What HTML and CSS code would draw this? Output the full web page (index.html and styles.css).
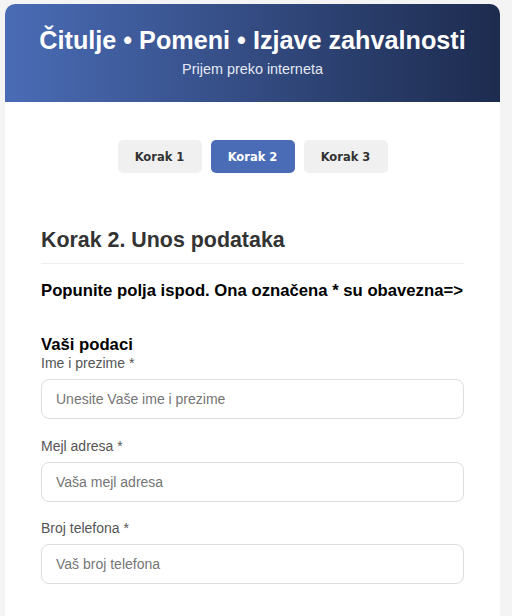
FILE: index.html
```html
<!DOCTYPE html>
<html lang="sr">
<head>
<meta charset="utf-8">
<title>Čitulje • Pomeni • Izjave zahvalnosti</title>
<link rel="stylesheet" href="styles.css">
</head>
<body>
<div class="container">
  <header class="header">
    <h1 class="title">Čitulje • Pomeni • Izjave zahvalnosti</h1>
    <p class="subtitle">Prijem preko interneta</p>
  </header>
  <main class="content">
    <nav class="steps">
      <span class="step">Korak 1</span>
      <span class="step step-active">Korak 2</span>
      <span class="step">Korak 3</span>
    </nav>
    <h2 class="section-title">Korak 2. Unos podataka</h2>
    <p class="intro">Popunite polja ispod. Ona označena * su obavezna=&gt;</p>
    <h3 class="group-title">Vaši podaci</h3>
    <div class="field">
      <label class="label" for="ime">Ime i prezime *</label>
      <input class="input" id="ime" type="text" placeholder="Unesite Vaše ime i prezime">
    </div>
    <div class="field">
      <label class="label" for="mejl">Mejl adresa *</label>
      <input class="input" id="mejl" type="email" placeholder="Vaša mejl adresa">
    </div>
    <div class="field">
      <label class="label" for="tel">Broj telefona *</label>
      <input class="input" id="tel" type="tel" placeholder="Vaš broj telefona">
    </div>
  </main>
</div>
</body>
</html>
```
FILE: styles.css
```css
html, body {
  margin: 0;
  padding: 0;
}
body {
  background: #f4f4f4;
  font-family: "Liberation Sans", Arial, sans-serif;
  padding: 4px 12px 0 5px;
}
.container {
  background: #fff;
  border-radius: 10px 10px 0 0;
  overflow: hidden;
  min-height: 620px;
}
.header {
  background: linear-gradient(90deg, #4a6cb6 0%, #1d2b4e 100%);
  color: #fff;
  text-align: center;
  height: 98px;
  box-sizing: border-box;
  padding-top: 21px;
}
.title {
  margin: 0;
  font-size: 25.2px;
  font-weight: bold;
  line-height: 30px;
}
.subtitle {
  margin: 5px 0 0;
  font-size: 14.4px;
  line-height: 18px;
  color: #e4e9f3;
}
.content {
  padding: 38px 36px 20px;
}
.steps {
  display: flex;
  justify-content: center;
  gap: 9px;
}
.step {
  width: 84px;
  height: 33px;
  display: flex;
  align-items: center;
  justify-content: center;
  background: #f0f0f0;
  color: #333;
  border-radius: 5px;
  font-family: "DejaVu Sans", Tahoma, sans-serif;
  font-weight: bold;
  font-size: 11.5px;
}
.step-active {
  background: #4a6cb6;
  color: #fff;
}
.section-title {
  margin: 55px 0 0;
  font-size: 21.4px;
  line-height: 25px;
  color: #333;
  padding-bottom: 10px;
  border-bottom: 1px solid #eee;
}
.intro {
  margin: 17px 0 0;
  font-size: 16.7px;
  line-height: 20px;
  font-weight: bold;
  color: #000;
}
.group-title {
  margin: 34px 0 1px;
  font-size: 16.7px;
  line-height: 19px;
  color: #000;
}
.field {
  display: flex;
  flex-direction: column;
  margin-bottom: 18.5px;
}
.label {
  font-size: 14px;
  line-height: 17px;
  color: #555;
  margin-bottom: 7px;
}
.input {
  height: 40px;
  box-sizing: border-box;
  border: 1px solid #ddd;
  border-radius: 8px;
  padding: 0 14px;
  font-family: "Liberation Sans", Arial, sans-serif;
  font-size: 14px;
  color: #333;
  background: #fff;
}
.input::placeholder {
  color: #757575;
}
```
